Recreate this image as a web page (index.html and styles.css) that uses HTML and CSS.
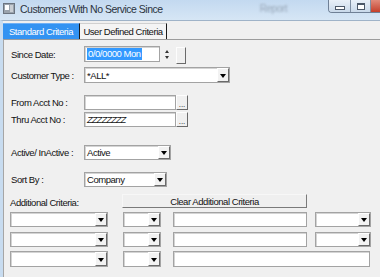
FILE: index.html
```html
<!DOCTYPE html>
<html lang="en">
  <head>
    <meta charset="UTF-8" />
    <title>Customers With No Service Since</title>
    <link rel="stylesheet" href="styles.css">
  </head>
  <body>
    <div class="window">
      <div class="titlebar">
        <svg class="app-icon" width="12" height="11" viewBox="0 0 12 11">
          <rect x="0.5" y="0.5" width="11" height="10" fill="#9aa3ad" stroke="#6b7480" />
          <rect x="2" y="2" width="4" height="5" fill="#fff" />
          <rect x="7" y="2" width="3" height="7" fill="#c9ced4" />
        </svg>
        <span class="title">Customers With No Service Since</span>
        <span class="ghost">Report</span>
        <div class="caption-btns">
          <span class="cbtn min"><i></i></span>
          <span class="cbtn max"><i></i></span>
          <span class="cbtn close"></span>
        </div>
      </div>

      <div class="client">
        <div class="tabs">
          <span class="tab active">Standard Criteria</span>
          <span class="tab">User Defined Criteria</span>
        </div>

        <div class="page">
          <!-- main criteria -->
          <div class="row r1">
            <span class="lbl">Since Date:</span>
            <span class="field date"><span class="hl">0/0/0000 Mon</span></span>
            <span class="spin"><i class="up"></i><i class="down"></i></span>
            <span class="btn tiny"></span>
          </div>
          <div class="row r2">
            <span class="lbl">Customer Type :</span>
            <span class="combo w146"><span class="val">*ALL*</span><span class="drop"><i></i></span></span>
          </div>
          <div class="row r3">
            <span class="lbl">From Acct No :</span>
            <span class="field w92"></span>
            <span class="btn dots">...</span>
          </div>
          <div class="row r4">
            <span class="lbl">Thru Acct No :</span>
            <span class="field w92"><span class="zz">ZZZZZZZZ</span></span>
            <span class="btn dots">...</span>
          </div>
          <div class="row r5">
            <span class="lbl">Active/ InActive :</span>
            <span class="combo w87"><span class="val">Active</span><span class="drop"><i></i></span></span>
          </div>
          <div class="row r6">
            <span class="lbl">Sort By :</span>
            <span class="combo w83"><span class="val">Company</span><span class="drop"><i></i></span></span>
          </div>

          <!-- additional criteria -->
          <div class="row r7">
            <span class="add-lbl">Additional Criteria:</span>
            <span class="btn clear">Clear Additional Criteria</span>
          </div>
          <div class="row add a1">
            <span class="combo c1"><span class="val"></span><span class="drop"><i></i></span></span>
            <span class="combo c2"><span class="val"></span><span class="drop"><i></i></span></span>
            <span class="field c3"></span>
            <span class="combo c4"><span class="val"></span><span class="drop"><i></i></span></span>
          </div>
          <div class="row add a2">
            <span class="combo c1"><span class="val"></span><span class="drop"><i></i></span></span>
            <span class="combo c2"><span class="val"></span><span class="drop"><i></i></span></span>
            <span class="field c3"></span>
            <span class="combo c4"><span class="val"></span><span class="drop"><i></i></span></span>
          </div>
          <div class="row add a3">
            <span class="combo c1"><span class="val"></span><span class="drop"><i></i></span></span>
            <span class="combo c2"><span class="val"></span><span class="drop"><i></i></span></span>
            <span class="field c5"></span>
          </div>
        </div>
      </div>
    </div>
  </body>
</html>
```

FILE: styles.css
```css
body {
  margin: 0;
  width: 380px;
  height: 277px;
  overflow: hidden;
  font-family: "Liberation Sans", Arial, sans-serif;
  font-size: 9.5px;
  letter-spacing: -0.45px;
  color: #111;
  background: #f0f0f0;
}
.window {
  display: flex;
  flex-direction: column;
  height: 277px;
}

/* title bar */
.titlebar {
  height: 20px;
  display: flex;
  align-items: flex-start;
  background: linear-gradient(#c3d9f0, #d6e6f5);
  flex-shrink: 0;
}
.app-icon {
  margin: 3px 0 0 3px;
}
.title {
  margin: 3px 0 0 5px;
  font-size: 10.5px;
  letter-spacing: -0.5px;
  color: #2a3340;
}
.ghost {
  margin: 3px 0 0 97px;
  font-size: 10px;
  color: #9aa9ba;
  filter: blur(1px);
}
.caption-btns {
  margin-left: auto;
  display: flex;
  height: 12px;
  border-left: 1px solid #6f8096;
  border-bottom: 1px solid #6f8096;
  border-bottom-left-radius: 4px;
  overflow: hidden;
}
.cbtn {
  display: flex;
  justify-content: center;
  align-items: center;
  background: linear-gradient(#e9f0f8, #c9d9ea);
  border-right: 1px solid #7f8fa3;
}
.cbtn.min { width: 21px; }
.cbtn.max { width: 19px; }
.cbtn.close {
  width: 9px;
  border-right: 0;
  background: linear-gradient(#e08a7a, #c4402c);
}
.cbtn.min i {
  width: 8px;
  height: 2px;
  margin-top: 4px;
  background: #fff;
  border: 1px solid #4c5868;
}
.cbtn.max i {
  width: 6px;
  height: 4px;
  background: #fff;
  border: 1px solid #4c5868;
  border-top-width: 2px;
}

/* client area */
.client {
  flex: 1;
  display: flex;
  flex-direction: column;
  border-left: 3px solid #c8dcf0;
  border-top: 1px solid #9fb3c8;
}
.tabs {
  display: flex;
  height: 16px;
  margin-top: 2px;
}
.tab {
  display: flex;
  align-items: center;
  justify-content: center;
  height: 16px;
  border-top: 1px solid #d0d0d0;
  border-right: 1px solid #1a1a1a;
  box-sizing: border-box;
}
.tab.active {
  width: 77px;
  background: #3393f2;
  color: #fff;
  border-top-color: #6fb0f5;
}
.tab + .tab {
  width: 87px;
  background: #f4f4f4;
}
.page {
  flex: 1;
  display: flex;
  flex-direction: column;
  border-top: 1px solid #9c9c9c;
  border-left: 1px solid #a6a6a6;
}

/* rows */
.row {
  display: flex;
  align-items: center;
  height: 15px;
}
.r1 { margin-top: 6px; height: 16px; }
.r2 { margin-top: 5px; height: 16px; }
.r3 { margin-top: 12px; }
.r4 { margin-top: 2px; }
.r5 { margin-top: 18px; }
.r6 { margin-top: 12px; }
.r7 { margin-top: 7px; height: 14px; }
.a1 { margin-top: 4px; }
.a2 { margin-top: 5px; }
.a3 { margin-top: 4px; height: 16px; }
.lbl {
  width: 80px;
  padding-left: 7px;
  box-sizing: border-box;
  flex-shrink: 0;
}

/* controls */
.field,
.combo {
  height: 100%;
  box-sizing: border-box;
  background: #fff;
  border: 1px solid #a3a3a3;
  box-shadow: inset 1px 1px 0 #d4d4d4;
  display: flex;
  align-items: center;
}
.val {
  flex: 1;
  padding-left: 2px;
}
.drop {
  width: 12px;
  height: 100%;
  box-sizing: border-box;
  display: flex;
  justify-content: center;
  align-items: center;
  background: #f2f2f2;
  border-left: 1px solid #fff;
  border-top: 1px solid #fff;
  border-right: 1px solid #6a6a6a;
  border-bottom: 1px solid #6a6a6a;
}
.drop i {
  width: 0;
  height: 0;
  border-left: 3px solid transparent;
  border-right: 3px solid transparent;
  border-top: 4px solid #000;
  margin-top: 1px;
}
.btn {
  height: 100%;
  box-sizing: border-box;
  background: #f0f0f0;
  border: 1px solid;
  border-color: #fdfdfd #6a6a6a #6a6a6a #fdfdfd;
  display: flex;
  justify-content: center;
  align-items: center;
}

.date { width: 76px; }
.hl {
  margin-left: 2px;
  padding: 0 1px;
  background: #3399ff;
  color: #fff;
  line-height: 12px;
}
.spin {
  width: 13px;
  height: 100%;
  display: flex;
  flex-direction: column;
  align-items: center;
  justify-content: center;
  gap: 3px;
}
.spin i {
  width: 0;
  height: 0;
  border-left: 2px solid transparent;
  border-right: 2px solid transparent;
}
.spin .up { border-bottom: 3px solid #333; }
.spin .down { border-top: 3px solid #333; }
.btn.tiny {
  width: 10px;
  height: 17px;
  margin-left: 3px;
  margin-top: 2px;
}

.w146 { width: 146px; }
.w92 { width: 92px; }
.w87 { width: 87px; }
.w83 { width: 83px; }
.btn.dots {
  width: 12px;
  align-items: flex-end;
  font-size: 8px;
  letter-spacing: 0;
  line-height: 9px;
}
.zz {
  padding-left: 2px;
  font-style: italic;
  letter-spacing: -1px;
}

/* additional criteria */
.add-lbl {
  width: 112px;
  margin-left: 6px;
  align-self: flex-end;
}
.btn.clear {
  width: 185px;
  background: #efefef;
  border-color: #f7f7f7 #7a7a7a #7a7a7a #f7f7f7;
}
.add .c1 { width: 98px; margin-left: 6px; }
.add .c2 { width: 38px; margin-left: 15px; }
.add .c3 { width: 134px; margin-left: 12px; }
.add .c4 { width: 56px; margin-left: 8px; }
.add .c5 { width: 197px; margin-left: 12px; }
```
